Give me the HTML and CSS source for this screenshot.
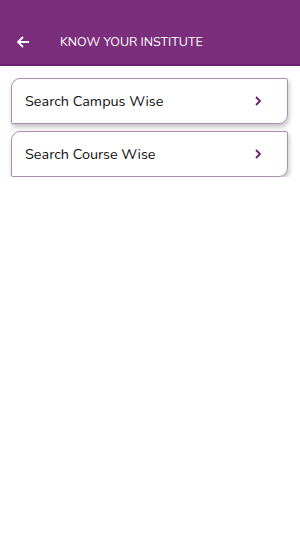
FILE: index.html
```html
<!DOCTYPE html>
<html>
<head>
  <meta charset="UTF-8">
  <title>Know Your Institute</title>
  <meta name="viewport" content="width=device-width, initial-scale=1.0">
  <link rel="stylesheet" href="styles.css">
</head>
<body>

  <div class="top-bar">
    <a href="#" class="back" title="Back">
      <svg width="14" height="14" viewBox="0 0 14 14"><path d="M13 7H2M7 2L2 7l5 5" fill="none" stroke="#fff" stroke-width="1.8"/></svg>
    </a>
    <div class="title">KNOW YOUR INSTITUTE</div>
  </div>

  <div class="menu">
    <a href="#" class="menu-item">
      <span>Search Campus Wise</span>
      <svg width="8" height="10" viewBox="0 0 8 10"><path d="M2 1l4 4-4 4" fill="none" stroke="#6e1f73" stroke-width="1.8"/></svg>
    </a>
    <a href="#" class="menu-item">
      <span>Search Course Wise</span>
      <svg width="8" height="10" viewBox="0 0 8 10"><path d="M2 1l4 4-4 4" fill="none" stroke="#6e1f73" stroke-width="1.8"/></svg>
    </a>
  </div>

</body>
</html>
```

FILE: styles.css
```css
body {
  font-family: 'Nunito', 'Open Sans', sans-serif;
  background: #fff;
  margin: 0;
  padding: 0;
}
.top-bar {
  background: #7a2e7b;
  border-bottom: 2px solid #6a2070;
  display: flex;
  align-items: flex-end;
  padding: 0 0 15px 16px;
  height: 49px;
}
.back {
  display: flex;
  width: 14px;
  height: 14px;
  margin-right: 30px;
}
.title {
  color: #fff;
  font-size: 12.5px;
  line-height: 14px;
}
.menu {
  padding: 12px 12px 0 11px;
  display: flex;
  flex-direction: column;
  gap: 7px;
}
.menu-item {
  height: 46px;
  display: flex;
  align-items: center;
  justify-content: space-between;
  padding: 0 25px 0 13px;
  border: 1px solid #b08cb4;
  border-radius: 9px 2px 9px 2px;
  box-shadow: 1px 3px 5px rgba(0, 0, 0, 0.25);
  text-decoration: none;
  color: #111;
  font-size: 14.4px;
  box-sizing: border-box;
}
```
